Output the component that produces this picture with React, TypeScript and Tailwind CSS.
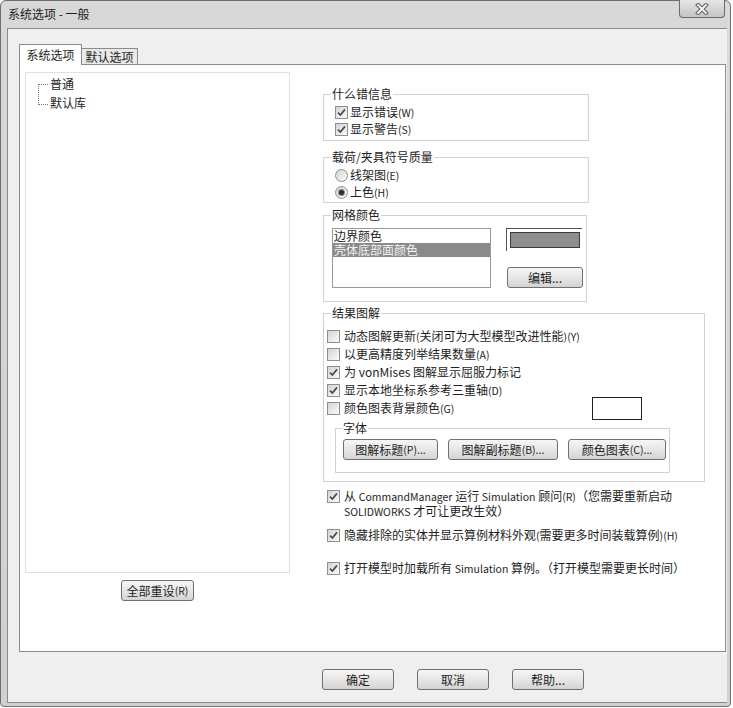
import type { ReactNode } from 'react'

// latin runs in the reference are set smaller than the CJK text
function L({ children }: { children: ReactNode }) {
  return <span className="text-[10.5px]">{children}</span>
}

function Check({ checked }: { checked?: boolean }) {
  return (
    <span className="flex h-[13px] w-[13px] shrink-0 items-center justify-center border border-[#8e8f8f] bg-linear-to-br from-[#d4d4d4] to-[#fafafa]">
      {checked && (
        <svg width="9" height="9" viewBox="0 0 9 9">
          <path d="M1 4.6 L3.4 7 L8 1.4" fill="none" stroke="#4a4a4a" strokeWidth="1.7" />
        </svg>
      )}
    </span>
  )
}

function Radio({ on }: { on?: boolean }) {
  return (
    <span className="flex h-[13px] w-[13px] shrink-0 items-center justify-center rounded-full border border-[#8e8f8f] bg-linear-to-br from-[#d4d4d4] to-[#fafafa]">
      {on && <span className="h-[5px] w-[5px] rounded-full bg-[#2e2e2e] ring-1 ring-[#8a8a8a]" />}
    </span>
  )
}

function Btn({ className, children }: { className: string; children: ReactNode }) {
  return (
    <button
      type="button"
      className={`flex h-[21px] shrink-0 items-center justify-center rounded-[3px] border border-[#707070] bg-linear-to-b from-[#f6f6f6] via-[#e6e6e6] to-[#d4d4d4] text-[12px] leading-[14px] text-[#1e1e1e] ${className}`}
    >
      {children}
    </button>
  )
}

export default function App() {
  return (
    <div className="h-[708px] w-[733px] bg-white font-['Noto_Sans_CJK_SC',sans-serif] text-[12px] leading-[14px] text-[#1e1e1e]">
      <div className="flex h-[707px] w-[731px] flex-col rounded-t-[6px] rounded-b-[4px] border border-[#6f6f6f] bg-linear-to-b from-[#d8d8d8] to-[#d0d0d0]">
        {/* title bar */}
        <div className="flex h-[27px] shrink-0 items-start justify-between">
          <div className="pl-[7px] pt-[6px] text-[12px] leading-[14px] text-[#202020]">系统选项 - 一般</div>
          <div className="-mt-[1px] mr-[5px] flex h-[18px] w-[46px] items-center justify-center rounded-b-[4px] border border-t-0 border-[#6a6a6a] bg-linear-to-b from-[#e6e6e6] to-[#c4c4c4]">
            <svg width="14" height="12" viewBox="0 0 14 12">
              <path d="M3 2 L11 10 M11 2 L3 10" stroke="#5c5c5c" strokeWidth="4" strokeLinecap="square" />
              <path d="M3 2 L11 10 M11 2 L3 10" stroke="#f4f4f4" strokeWidth="2" strokeLinecap="square" />
            </svg>
          </div>
        </div>

        {/* client */}
        <div className="ml-[6px] flex h-[675px] w-[720px] flex-col border-t border-b border-l border-[#8a8a8a] bg-[#efefef]">
          <div className="ml-[11px] mt-[15px] w-[707px]">
            {/* tabs */}
            <div className="flex h-[20px] items-end">
              <div className="relative z-10 -mb-[1px] flex h-[21px] w-[63px] items-center justify-center border border-b-0 border-[#8c8c8c] bg-white">
                系统选项
              </div>
              <div className="flex h-[16px] w-[56px] items-center justify-center border-t border-r border-[#8c8c8c] bg-[#e9e9e9]">
                默认选项
              </div>
            </div>

            {/* panel */}
            <div className="flex h-[588px] border border-[#8c8c8c] bg-white">
              {/* left column */}
              <div className="ml-[5px] mt-[7px] flex w-[265px] flex-col">
                <div className="h-[501px] border border-[#e0e0e0] pt-[1px]">
                  <div className="ml-[12px] flex">
                    <div className="mt-[10px] h-[21px] w-[10px] border-t border-b border-l border-dotted border-[#7a7a7a]" />
                    <div className="ml-[2px] flex flex-col">
                      <div className="flex h-[19px] items-center">普通</div>
                      <div className="flex h-[19px] items-center">默认库</div>
                    </div>
                  </div>
                </div>
                <Btn className="mt-[7px] w-[73px] self-center">全部重设<L>(R)</L></Btn>
              </div>

              {/* right column */}
              <div className="ml-[33px] flex w-[382px] flex-col">
                <fieldset className="mt-[22px] w-[266px] border border-[#d2d2d2] pb-[2px] pl-[11px] pt-[3px]">
                  <legend className="-ml-[4px] px-[1px]">什么错信息</legend>
                  <div className="flex h-[17px] items-center gap-[2px]">
                    <Check checked />
                    <span>显示错误<L>(W)</L></span>
                  </div>
                  <div className="flex h-[17px] items-center gap-[2px]">
                    <Check checked />
                    <span>显示警告<L>(S)</L></span>
                  </div>
                </fieldset>

                <fieldset className="mt-[9px] w-[266px] border border-[#d2d2d2] pb-[1px] pl-[11px] pt-[3px]">
                  <legend className="-ml-[4px] px-[1px]">载荷/夹具符号质量</legend>
                  <div className="flex h-[17px] items-center gap-[2px]">
                    <Radio />
                    <span>线架图<L>(E)</L></span>
                  </div>
                  <div className="flex h-[17px] items-center gap-[2px]">
                    <Radio on />
                    <span>上色<L>(H)</L></span>
                  </div>
                </fieldset>

                <fieldset className="mt-[5px] w-[264px] border border-[#d2d2d2] pb-[13px] pl-[8px] pt-[6px]">
                  <legend className="-ml-[1px] px-[1px]">网格颜色</legend>
                  <div className="flex">
                    <div className="h-[60px] w-[159px] border border-[#9a9a9a] bg-white">
                      <div className="flex h-[14px] items-center pl-[1px]">边界颜色</div>
                      <div className="flex h-[14px] items-center bg-[#8a8a8a] pl-[1px] text-[#f4f4f4]">壳体底部面颜色</div>
                    </div>
                    <div className="ml-[15px] flex flex-col">
                      <div className="h-[23px] w-[76px] border-t border-l border-[#555] border-r-[#e8e8e8] border-b-[#e8e8e8] p-[3px]">
                        <div className="h-[16px] w-[70px] border border-[#3a3a3a] bg-[#8e8e8e]" />
                      </div>
                      <Btn className="mt-[16px] ml-[1px] w-[76px]">编辑...</Btn>
                    </div>
                  </div>
                </fieldset>

                <fieldset className="mt-[4px] w-[382px] border border-[#d2d2d2] pb-[8px] pl-[3px] pt-[7px]">
                  <legend className="ml-[4px] px-[1px]">结果图解</legend>
                  <div className="flex h-[18px] items-center gap-[4px]">
                    <Check />
                    <span>动态图解更新<L>(</L>关闭可为大型模型改进性能<L>)(Y)</L></span>
                  </div>
                  <div className="flex h-[18px] items-center gap-[4px]">
                    <Check />
                    <span>以更高精度列举结果数量<L>(A)</L></span>
                  </div>
                  <div className="flex h-[18px] items-center gap-[4px]">
                    <Check checked />
                    <span>为 vonMises 图解显示屈服力标记</span>
                  </div>
                  <div className="flex h-[18px] items-center gap-[4px]">
                    <Check checked />
                    <span>显示本地坐标系参考三重轴<L>(D)</L></span>
                  </div>
                  <div className="flex h-[18px] items-center">
                    <div className="flex w-[265px] items-center gap-[4px]">
                      <Check />
                      <span>颜色图表背景颜色<L>(G)</L></span>
                    </div>
                    <div className="h-[23px] w-[50px] shrink-0 border border-[#222] bg-white" />
                  </div>

                  <fieldset className="ml-[8px] mt-[4px] w-[335px] border border-[#d2d2d2] pb-[12px] pl-[7px] pt-[4px]">
                    <legend className="-ml-[1px] px-[1px]">字体</legend>
                    <div className="flex gap-[10px]">
                      <Btn className="w-[95px]">图解标题<L>(P)...</L></Btn>
                      <Btn className="w-[110px]">图解副标题<L>(B)...</L></Btn>
                      <Btn className="w-[98px]">颜色图表<L>(C)...</L></Btn>
                    </div>
                  </fieldset>
                </fieldset>

                <div className="mt-[7px] flex gap-[4px] pl-[4px]">
                  <div className="flex h-[14px] items-center">
                    <Check checked />
                  </div>
                  <span>
                    从 <L>CommandManager</L> 运行 <L>Simulation</L> 顾问<L>(R)</L>（您需要重新启动
                    <br />
                    <L>SOLIDWORKS</L> 才可让更改生效）
                  </span>
                </div>
                <div className="mt-[9px] flex h-[14px] items-center gap-[4px] pl-[4px]">
                  <Check checked />
                  <span>隐藏排除的实体并显示算例材料外观<L>(</L>需要更多时间装载算例<L>)(H)</L></span>
                </div>
                <div className="mt-[19px] flex h-[14px] items-center gap-[4px] pl-[4px]">
                  <Check checked />
                  <span>打开模型时加载所有 <L>Simulation</L> 算例。（打开模型需要更长时间）</span>
                </div>
              </div>
            </div>
          </div>

          {/* dialog buttons */}
          <div className="mt-[17px] flex gap-[23px] pl-[314px]">
            <Btn className="w-[72px]">确定</Btn>
            <Btn className="w-[72px]">取消</Btn>
            <Btn className="w-[72px]">帮助...</Btn>
          </div>
        </div>
      </div>
    </div>
  )
}
